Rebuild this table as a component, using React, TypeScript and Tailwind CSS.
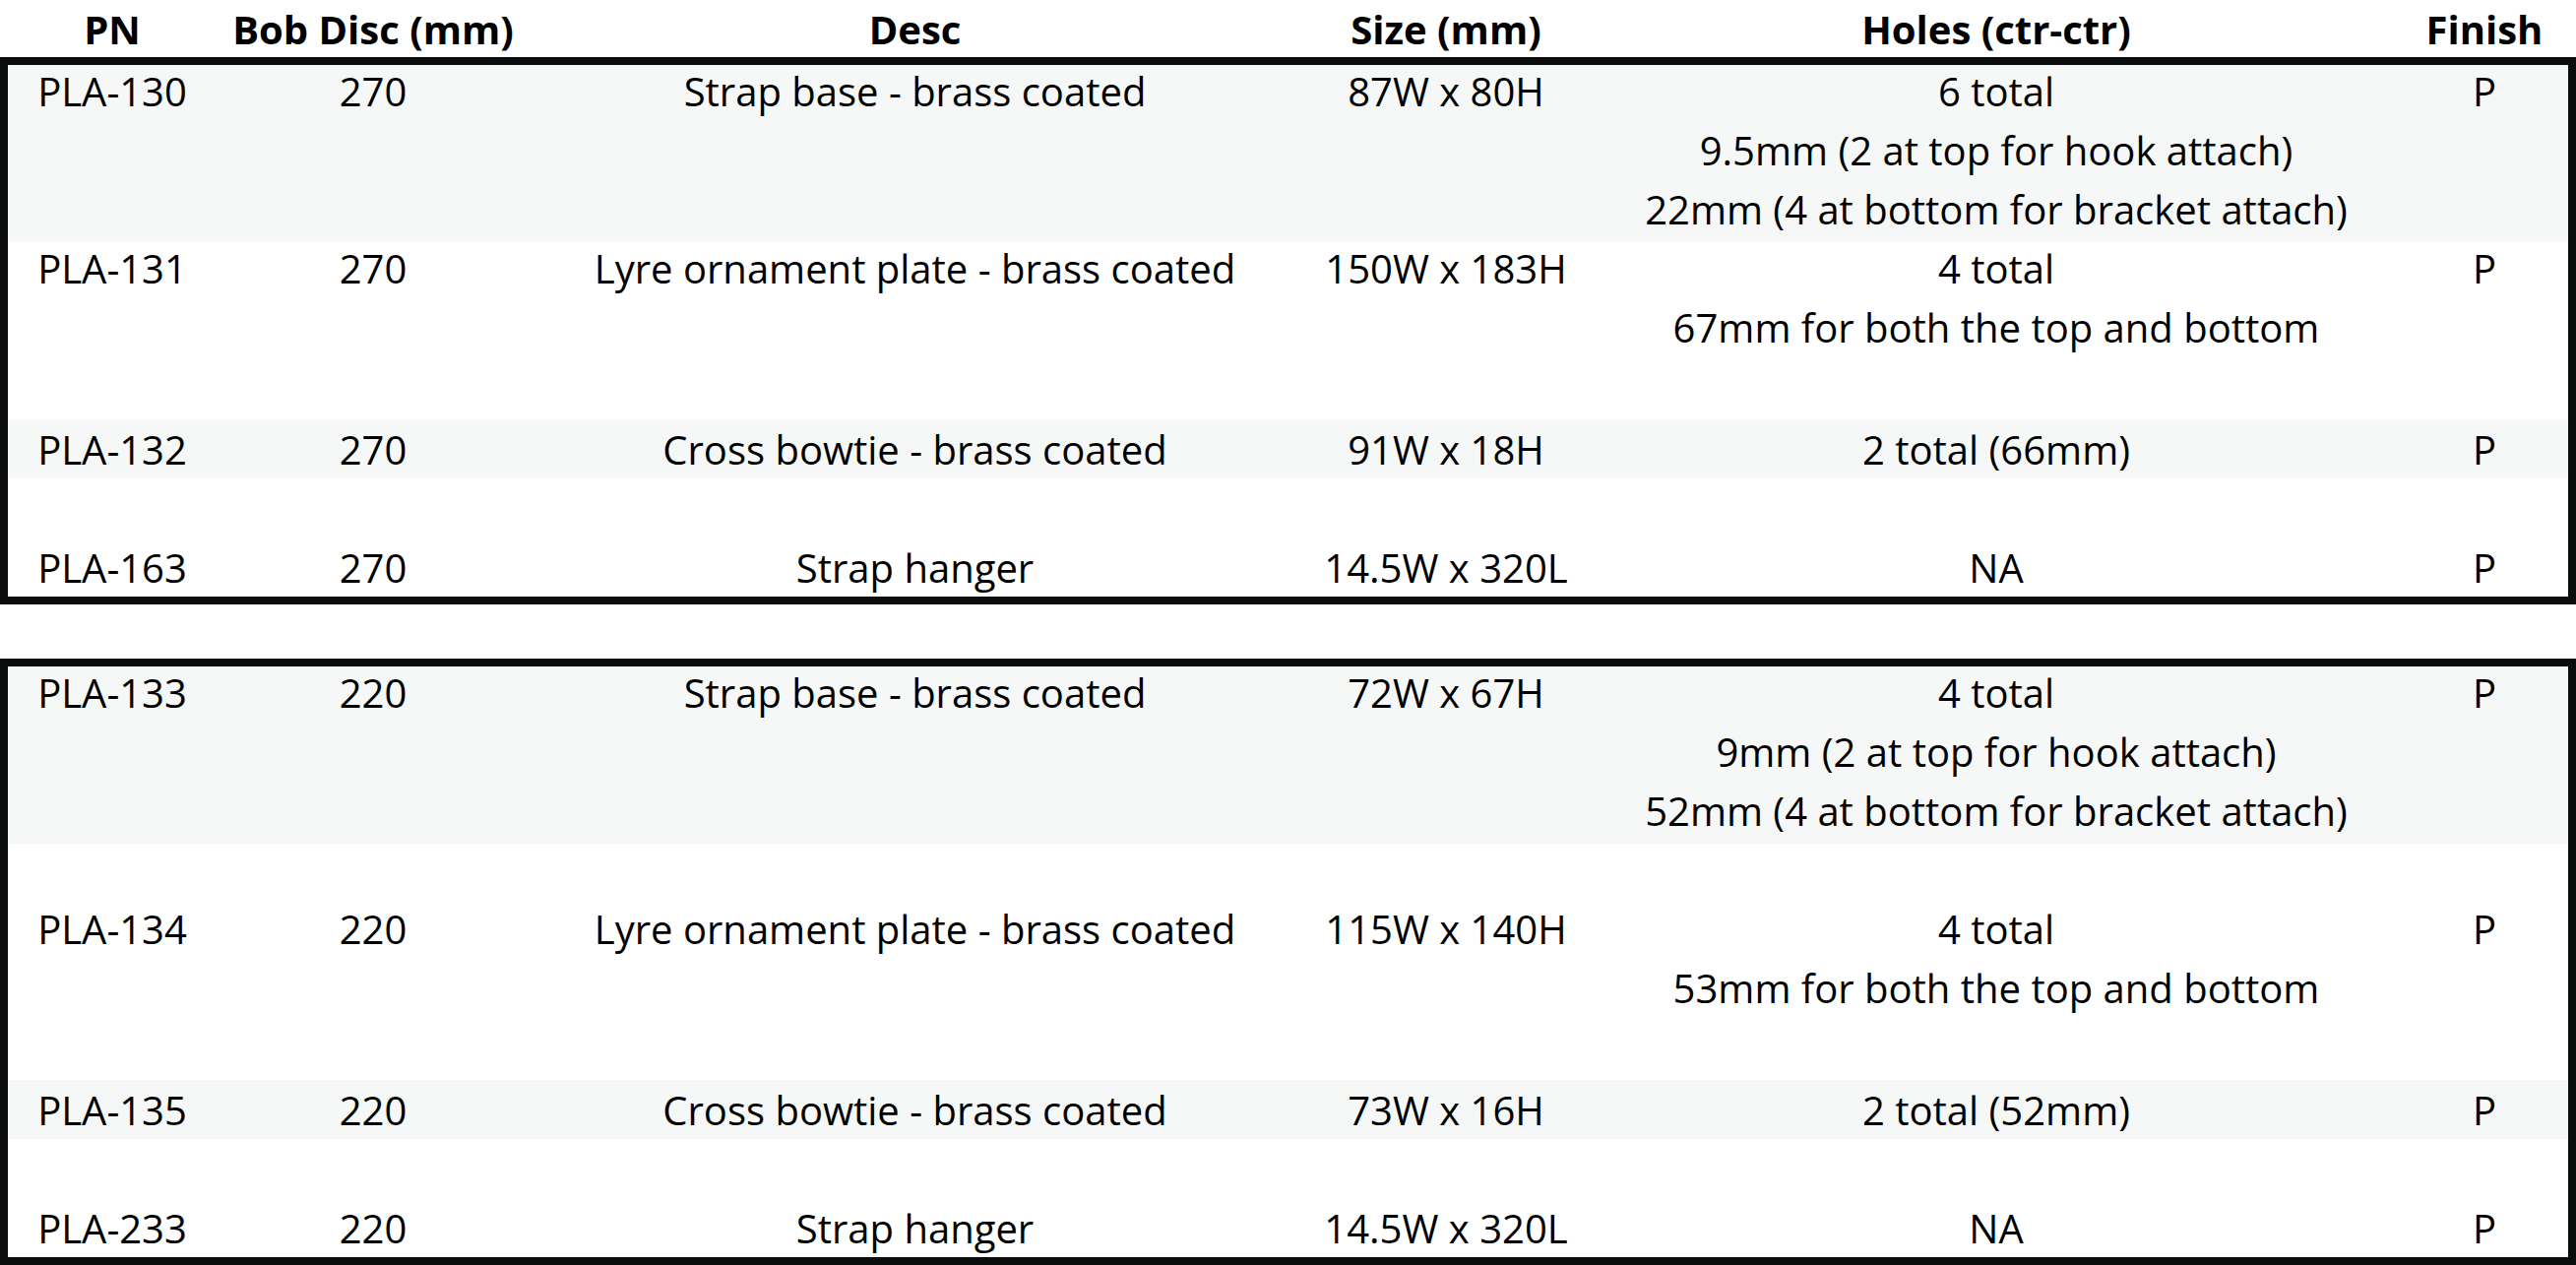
type Row = {
  pn: string;
  disc: string;
  desc: string;
  size: string;
  holes: string[];
  finish: string;
  lines: number;
  // blank lines above the text (Excel rows that were stretched)
  offset?: number;
  shaded?: boolean;
  // bottom-aligned rows sit a few px lower
  low?: boolean;
};

const COLS = 'grid grid-cols-[212px_318px_783px_296px_822px_170px]';

const TOP: Row[] = [
  {
    pn: 'PLA-130',
    disc: '270',
    desc: 'Strap base - brass coated',
    size: '87W x 80H',
    holes: ['6 total', '9.5mm (2 at top for hook attach)', '22mm (4 at bottom for bracket attach)'],
    finish: 'P',
    lines: 3,
    shaded: true,
  },
  {
    pn: 'PLA-131',
    disc: '270',
    desc: 'Lyre ornament plate - brass coated',
    size: '150W x 183H',
    holes: ['4 total', '67mm for both the top and bottom'],
    finish: 'P',
    lines: 3,
  },
  {
    pn: 'PLA-132',
    disc: '270',
    desc: 'Cross bowtie - brass coated',
    size: '91W x 18H',
    holes: ['2 total (66mm)'],
    finish: 'P',
    lines: 1,
    shaded: true,
    low: true,
  },
  {
    pn: 'PLA-163',
    disc: '270',
    desc: 'Strap hanger',
    size: '14.5W x 320L',
    holes: ['NA'],
    finish: 'P',
    lines: 2,
    offset: 1,
    low: true,
  },
];

const BOTTOM: Row[] = [
  {
    pn: 'PLA-133',
    disc: '220',
    desc: 'Strap base - brass coated',
    size: '72W x 67H',
    holes: ['4 total', '9mm (2 at top for hook attach)', '52mm (4 at bottom for bracket attach)'],
    finish: 'P',
    lines: 3,
    shaded: true,
  },
  {
    pn: 'PLA-134',
    disc: '220',
    desc: 'Lyre ornament plate - brass coated',
    size: '115W x 140H',
    holes: ['4 total', '53mm for both the top and bottom'],
    finish: 'P',
    lines: 4,
    offset: 1,
  },
  {
    pn: 'PLA-135',
    disc: '220',
    desc: 'Cross bowtie - brass coated',
    size: '73W x 16H',
    holes: ['2 total (52mm)'],
    finish: 'P',
    lines: 1,
    shaded: true,
    low: true,
  },
  {
    pn: 'PLA-233',
    disc: '220',
    desc: 'Strap hanger',
    size: '14.5W x 320L',
    holes: ['NA'],
    finish: 'P',
    lines: 2,
    offset: 1,
    low: true,
  },
];

function Cell({ lines, offset, low }: { lines: string[]; offset: number; low?: boolean }) {
  return (
    <div className="flex flex-col items-center">
      {offset > 0 && <div className="h-[60px]" />}
      {lines.map((t, i) => (
        <div key={i} className={`h-[60px] whitespace-nowrap ${low ? 'leading-[62px]' : 'leading-[54px]'}`}>
          {t}
        </div>
      ))}
    </div>
  );
}

function TableRow({ row }: { row: Row }) {
  const off = row.offset ?? 0;
  return (
    <div className={`${COLS} ${row.shaded ? 'bg-[#f5f8f7]' : 'bg-white'}`} style={{ height: row.lines * 60 }}>
      <Cell lines={[row.pn]} offset={off} low={row.low} />
      <Cell lines={[row.disc]} offset={off} low={row.low} />
      <Cell lines={[row.desc]} offset={off} low={row.low} />
      <Cell lines={[row.size]} offset={off} low={row.low} />
      <Cell lines={row.holes} offset={off} low={row.low} />
      <Cell lines={[row.finish]} offset={off} low={row.low} />
    </div>
  );
}

function PartTable({ rows }: { rows: Row[] }) {
  return (
    <div className="border-[8px] border-[#0b0c0c]">
      {rows.map((r) => (
        <TableRow key={r.pn} row={r} />
      ))}
    </div>
  );
}

export default function App() {
  return (
    <div className="w-[2617px] h-[1285px] overflow-hidden bg-white text-[40px] text-black font-['Open_Sans',sans-serif]">
      <div className={`${COLS} h-[58px] items-center px-[8px] font-bold whitespace-nowrap`}>
        <div className="text-center">PN</div>
        <div className="text-center">Bob Disc (mm)</div>
        <div className="text-center">Desc</div>
        <div className="text-center">Size (mm)</div>
        <div className="text-center">Holes (ctr-ctr)</div>
        <div className="text-center">Finish</div>
      </div>
      <PartTable rows={TOP} />
      <div className="h-[55px]" />
      <PartTable rows={BOTTOM} />
    </div>
  );
}
